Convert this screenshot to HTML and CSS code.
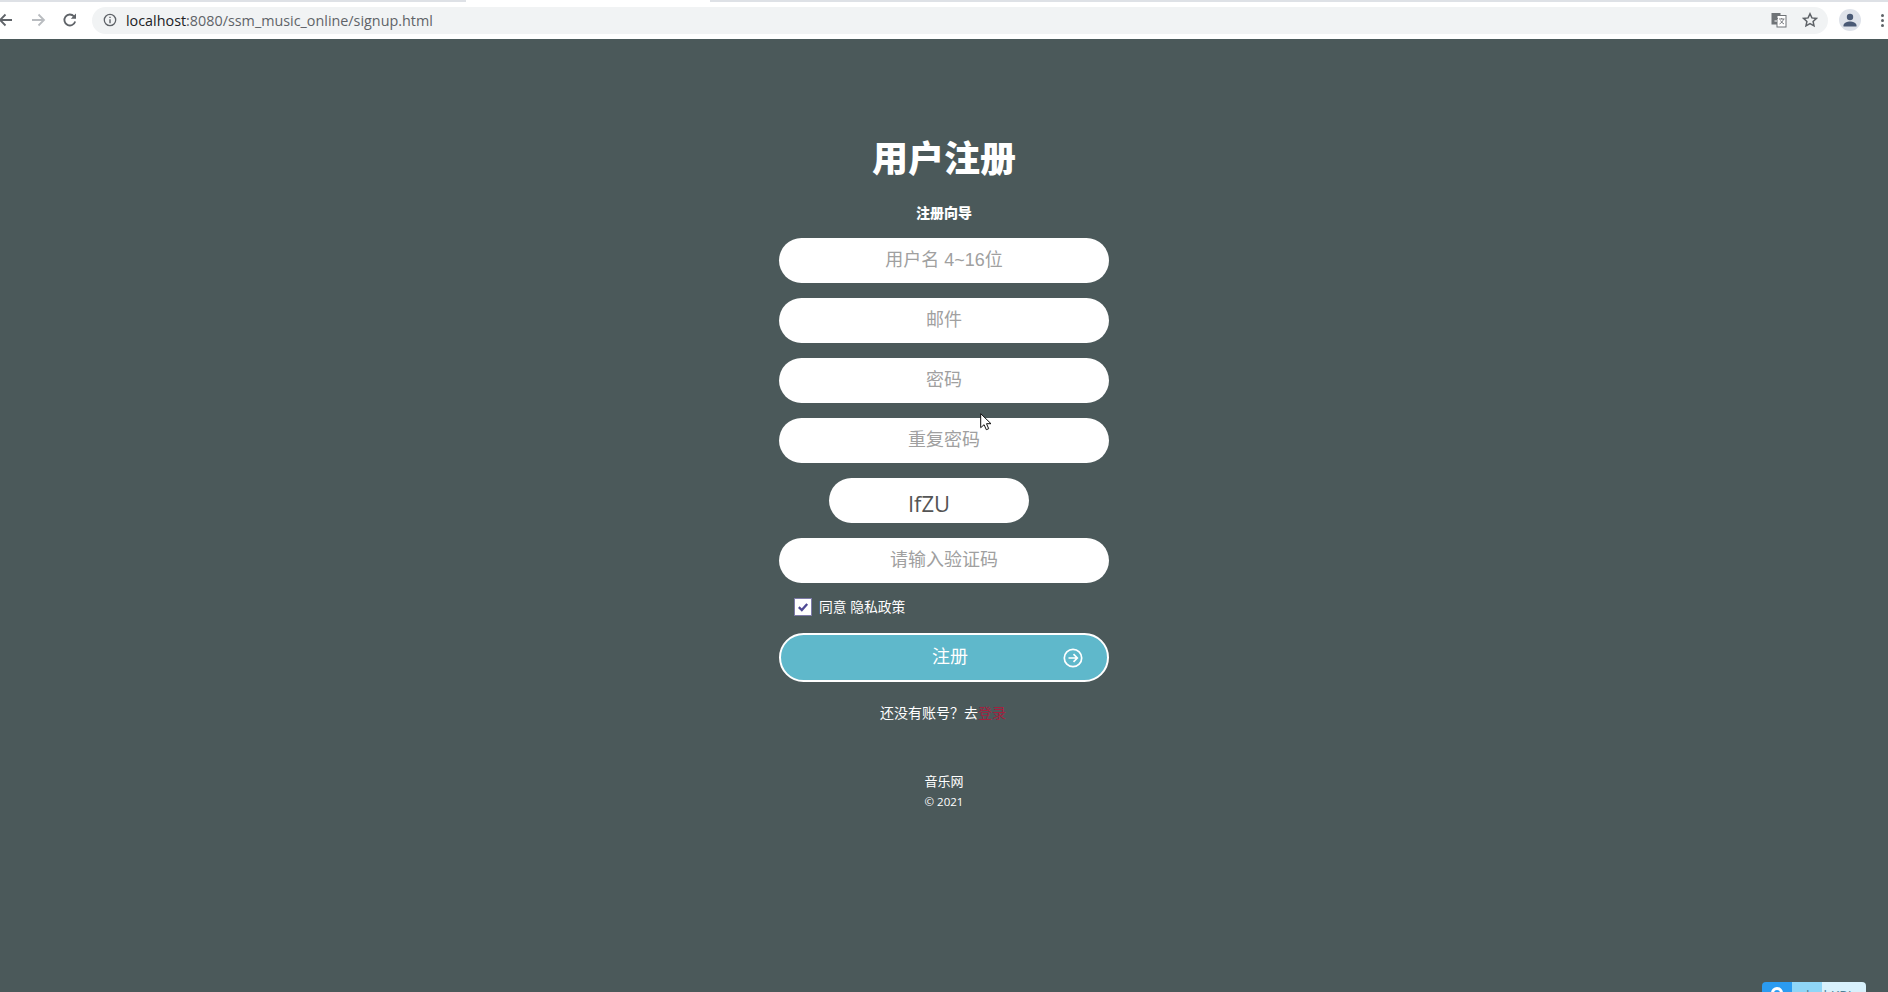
FILE: index.html
```html
<!DOCTYPE html>
<html lang="zh-CN">
<head>
    <meta charset="UTF-8">
    <title>signup.html</title>
    <link rel="stylesheet" href="styles.css">
</head>
<body>
    <div class="tabstrip">
        <div class="tab-gap-left"></div>
        <div class="tab-active"></div>
        <div class="tab-gap-right"></div>
    </div>
    <div class="toolbar">
        <svg class="nav-icon nav-back" viewBox="0 0 16 16"><path d="M14 8H2M7.500 2.500 2 8l5.500 5.500" fill="none" stroke="#5f6368" stroke-width="1.800"/></svg>
        <svg class="nav-icon nav-forward" viewBox="0 0 16 16"><path d="M2 8h12M8.500 2.500 14 8l-5.500 5.500" fill="none" stroke="#b9bcc0" stroke-width="1.800"/></svg>
        <svg class="nav-icon nav-reload" viewBox="0 0 16 16"><path d="M13.200 9.500A5.500 5.500 0 1 1 12 4.300" fill="none" stroke="#5f6368" stroke-width="1.800"/><path d="M14 1.500v5.200H8.800z" fill="#5f6368"/></svg>
        <div class="urlbar">
            <svg class="info-icon" viewBox="0 0 14 14"><circle cx="7" cy="7" r="5.700" fill="none" stroke="#5f6368" stroke-width="1.300"/><path d="M7 6.200v4M7 3.800v1.300" stroke="#5f6368" stroke-width="1.400"/></svg>
            <span class="url"><span class="url-host">localhost</span>:8080/ssm_music_online/signup.html</span>
            <svg class="translate-icon" viewBox="0 0 16 16"><rect x="0.500" y="1" width="9" height="11.500" fill="#6f7377"/><rect x="6" y="3.500" width="9" height="11.500" fill="#fff" stroke="#6f7377"/><path d="M2.500 6.500h4.500M8 7h5.500M10.700 6v1M12.500 7c-.5 2-2 4-4 5M9.500 8.500c.8 1.500 2 2.800 3.500 3.500" fill="none" stroke="#6f7377" stroke-width=".9"/><path d="M3.500 9h2.500" stroke="#fff" stroke-width="1"/></svg>
            <svg class="star-icon" viewBox="0 0 16 16"><path d="m8 1.800 1.900 4.100 4.500.5-3.300 3 .9 4.500L8 11.600l-4 2.300.9-4.500-3.300-3 4.500-.5z" fill="none" stroke="#5f6368" stroke-width="1.500"/></svg>
        </div>
        <div class="avatar">
            <svg viewBox="0 0 22 22"><circle cx="11" cy="8" r="3.200" fill="#4a5a75"/><path d="M4.500 16.500c0-2.700 4-4 6.500-4s6.500 1.300 6.500 4v1h-13z" fill="#4a5a75"/></svg>
        </div>
        <div class="menu-dots"><i></i><i></i><i></i></div>
    </div>

    <div class="page">
        <h1 class="title">用户注册</h1>
        <p class="subtitle">注册向导</p>
        <form class="signup-form">
            <input class="field" type="text" placeholder="用户名 4~16位">
            <input class="field" type="text" placeholder="邮件">
            <input class="field" type="password" placeholder="密码">
            <input class="field" type="password" placeholder="重复密码">
            <div class="captcha">IfZU</div>
            <input class="field" type="text" placeholder="请输入验证码">
            <label class="agree">
                <span class="checkbox">
                    <svg viewBox="0 0 16 16"><path d="M3.800 8.200 6.800 11l5.400-6" fill="none" stroke="#4f4a94" stroke-width="2.300"/></svg>
                </span>
                <span class="agree-text">同意 隐私政策</span>
            </label>
            <button class="submit" type="button">
                <span class="submit-label">注册</span>
                <svg class="submit-arrow" viewBox="0 0 20 20"><circle cx="10" cy="10" r="8.700" fill="none" stroke="#fff" stroke-width="1.700"/><path d="M5.500 10h8.500M10.500 6.200 14.300 10l-3.800 3.800" fill="none" stroke="#fff" stroke-width="1.700"/></svg>
            </button>
        </form>
        <p class="login-hint">还没有账号？去<a href="#">登录</a></p>
        <div class="site-name">音乐网</div>
        <div class="copyright">© 2021</div>
    </div>

    <svg class="cursor" viewBox="0 0 12 18"><path d="M.7.700v14l3.400-3 2.200 5 2.400-1-2.200-5h4.500z" fill="#fff" stroke="#111" stroke-width="1"/></svg>
    <div class="corner-widget">
        <i class="w-blue"><b class="w-ring"></b></i>
        <i class="w-mid"></i>
        <i class="w-light"></i>
        <span class="w-text">lvvl KPI</span>
    </div>
</body>
</html>
```

FILE: styles.css
```css
*{
    box-sizing: border-box;
}
html, body{
    height: 100%;
}
body{
    margin: 0;
    display: flex;
    flex-direction: column;
    overflow: hidden;
    font-family: "Open Sans", "Noto Sans CJK SC", sans-serif;
    background-color: #4b595a;
}

/* browser chrome */
.tabstrip{
    display: flex;
    height: 2px;
    background-color: #dee1e6;
}
.tab-gap-left{
    width: 466px;
}
.tab-active{
    width: 244px;
    background-color: #fff;
}
.tab-gap-right{
    flex: 1;
}
.toolbar{
    display: flex;
    align-items: center;
    height: 37px;
    padding-bottom: 1px;
    background-color: #fff;
}
.nav-icon{
    flex: none;
    width: 16px;
    height: 16px;
}
.nav-back{
    margin-left: -2px;
}
.nav-forward{
    margin-left: 16px;
}
.nav-reload{
    margin-left: 16px;
}
.urlbar{
    display: flex;
    align-items: center;
    flex: none;
    width: 1736px;
    height: 27px;
    margin-left: 14px;
    padding: 0 10px 0 11px;
    border-radius: 14px;
    background-color: #f1f3f4;
}
.info-icon{
    width: 14px;
    height: 14px;
}
.url{
    flex: 1;
    margin-left: 9px;
    font-size: 14.350px;
    color: #5f6368;
}
.url-host{
    color: #202124;
}
.translate-icon{
    width: 16px;
    height: 16px;
}
.star-icon{
    width: 16px;
    height: 16px;
    margin-left: 15px;
}
.avatar{
    flex: none;
    width: 22px;
    height: 22px;
    margin-left: 11px;
    border-radius: 50%;
    background-color: #dfe3ea;
}
.avatar svg{
    display: block;
}
.menu-dots{
    display: flex;
    flex-direction: column;
    gap: 2px;
    margin-left: 20px;
}
.menu-dots i{
    width: 3px;
    height: 3px;
    border-radius: 50%;
    background-color: #5f6368;
}

/* signup page */
.page{
    flex: 1;
    display: flex;
    flex-direction: column;
    align-items: center;
    color: #fff;
}
.title{
    margin: 96px 0 0;
    font-size: 36px;
    line-height: 48px;
    font-weight: 900;
}
.subtitle{
    margin: 20px 0 0;
    font-size: 14px;
    line-height: 20px;
    font-weight: 900;
}
.signup-form{
    display: flex;
    flex-direction: column;
    align-items: center;
    gap: 15px;
    width: 330px;
    margin-top: 15px;
}
.field{
    width: 330px;
    height: 45px;
    border: none;
    border-radius: 23px;
    outline: none;
    background-color: #fff;
    font-family: "Liberation Sans", "Noto Sans CJK SC", sans-serif;
    font-size: 18px;
    text-align: center;
}
.field::placeholder{
    color: #a0a0a0;
    opacity: 1;
}
.captcha{
    align-self: flex-start;
    width: 200px;
    height: 45px;
    margin-left: 50px;
    border-radius: 23px;
    background-color: #fff;
    color: #555;
    font-size: 22px;
    line-height: 50px;
    text-align: center;
}
.agree{
    display: flex;
    align-items: center;
    gap: 8px;
    align-self: flex-start;
    height: 18px;
    margin-left: 16px;
    font-size: 13.800px;
}
.agree-text{
    padding-bottom: 3px;
}
.checkbox{
    width: 16px;
    height: 16px;
    background-color: #fff;
    box-shadow: 0 0 0 1px #7d7aa8;
}
.checkbox svg{
    display: block;
}
.submit{
    display: flex;
    align-items: center;
    width: 330px;
    height: 49px;
    margin-top: 2px;
    padding: 0 24px 0 151px;
    border: 2px solid #fff;
    border-radius: 25px;
    background-color: #5fb8cb;
    color: #fff;
    font-family: inherit;
    font-size: 18px;
}
.submit-label{
    padding-bottom: 5px;
}
.submit-arrow{
    width: 20px;
    height: 20px;
    margin-left: auto;
}
.login-hint{
    margin: 21px 0 0;
    padding-right: 2px;
    font-size: 14px;
    line-height: 20px;
}
.login-hint a{
    color: #a3203f;
    text-decoration: none;
}
.site-name{
    margin-top: 48px;
    font-size: 13px;
    line-height: 21px;
}
.copyright{
    font-size: 11.500px;
    line-height: 20px;
}

/* things lying over the page */
.cursor{
    position: absolute;
    left: 980px;
    top: 413px;
    width: 12px;
    height: 18px;
}
.corner-widget{
    position: absolute;
    right: 22px;
    bottom: 0;
    display: flex;
    width: 104px;
    height: 10px;
    overflow: hidden;
    border-radius: 4px 4px 0 0;
}
.corner-widget i{
    display: block;
}
.w-blue{
    position: relative;
    width: 30px;
    background-color: #2b9bf0;
}
.w-ring{
    position: absolute;
    left: 9px;
    top: 5px;
    width: 12px;
    height: 12px;
    border: 3px solid #fff;
    border-radius: 50%;
}
.w-mid{
    width: 30px;
    background-color: #8fd6f7;
}
.w-light{
    flex: 1;
    background-color: #d8f1fc;
}
.w-text{
    position: absolute;
    left: 44px;
    top: 5px;
    color: #4d7f95;
    font-size: 14px;
    line-height: 18px;
    white-space: nowrap;
}
```
